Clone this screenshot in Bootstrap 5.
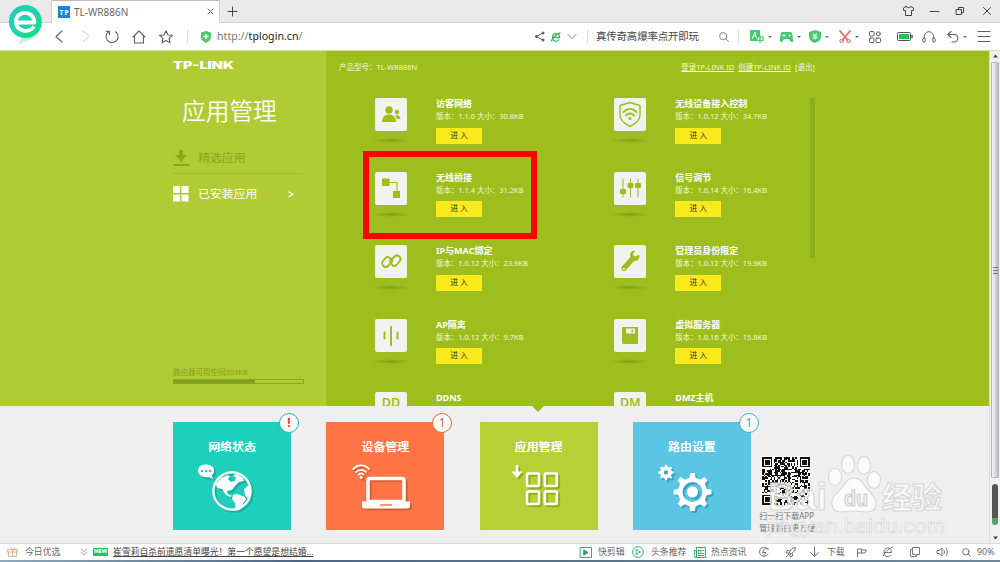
<!DOCTYPE html>
<html lang="zh-CN">
<head>
<meta charset="utf-8">
<meta name="viewport" content="width=device-width, initial-scale=1">
<title>TL-WR886N</title>
<link href="https://cdn.jsdelivr.net/npm/bootstrap@5.3.0/dist/css/bootstrap.min.css" rel="stylesheet">
<style>
  body{font-family:"Noto Sans","Noto Sans CJK SC",sans-serif;width:1000px;height:562px;overflow:hidden;font-size:9px;line-height:1;color:#444;background:#fff}
  svg{display:block;flex:none;overflow:visible}
  .ln{fill:none;stroke:currentColor;stroke-linecap:round;stroke-linejoin:round}
  /* browser frame */
  .tabstrip{height:23px;background:#eaeaea;border-bottom:1px solid #d2d2d2}
  .tab-now{width:169px;height:23px;margin-left:51px;background:#fff;border:1px solid #d2d2d2;border-top-color:#bbb;border-bottom:0;font-size:10px;color:#666;padding:0 5px 0 6px}
  .tab-ico{width:12px;height:12px;background:#1783df}
  .win-btns{display:grid;grid-template-columns:27px 26px 27px 9px;align-items:center;margin-right:1px}
  .logo-e{left:7px;top:4px;z-index:5}
  .toolbar{height:28px;grid-template-columns:46px repeat(5,26.6px) 22px 9px 7px 318px 16px 17px 19px 9px 123px 19px 12px repeat(4,29.7px) 28px 25px 25px 31px 1fr;border-bottom:1px solid #d4dfa2;color:#606060}
  .sep{width:1px;height:14px;background:#ddd}
  .url{font-size:10.6px;color:#777;letter-spacing:.02px}
  .url b{font-weight:400;color:#222}
  .find{font-size:10.4px;color:#444;letter-spacing:-.1px}
  .caret{width:0;border:2px solid transparent;border-top-color:#666;margin-top:2px}
  /* router page */
  .viewport{height:492px}
  .page{width:989px;background:#efefef}
  .stage{height:355px;background:#9dbe1c}
  .side{width:326px;background:#b0cb33;padding:10px 22px 0 173px;color:#fff}
  .side h1{font-size:23.7px;font-weight:350;margin:26px 0 0 9px;line-height:30px}
  .side-item{height:36px;font-size:11.9px;width:129px}
  .dim{color:#8ba71c;border-bottom:1px solid #a4bd2b;margin-top:12px;padding-top:5px}
  .space{font-size:7.5px;color:#879f25;margin-top:159px}
  .space .progress{width:131px;height:5px;border:1px solid #8ba71c;border-radius:0;background:transparent;margin-top:2px}
  .space .progress-bar{background:#82a01c}
  .apps-pane{padding:0 0 0 13px;color:#fff;font-size:7.5px}
  .topline{height:33px;width:476px;color:#f6fadd}
  .topline a{color:#f6fadd;text-underline-offset:1px}
  .app-grid{grid-template-columns:239.3px 200px;grid-auto-rows:73.5px;margin:14px 0 0 36px;height:308px;overflow:hidden;width:435px}
  .app-left{width:61px}
  .app-ico{width:32px;height:33px;background:#f2f2ee;border-radius:2px;color:#9dbe1c;overflow:hidden}
  .app-shadow{width:40px;height:5px;margin:7px 0 0 -4px;background:radial-gradient(ellipse at center,#7f9d17 0,#91b11b 38%,transparent 70%)}
  .app-name{font-size:9px;font-weight:700;line-height:12px;white-space:nowrap}
  .app-ver{font-size:7.45px;line-height:12px;white-space:nowrap;color:#f4f9d8}
  .enter{display:flex;align-items:center;justify-content:center;width:46px;height:16px;padding:0;border:0;border-radius:0;background:#fbea1b;color:#333;font-size:7.8px;margin-top:5.5px;line-height:1}
  .big{font-size:12.5px;font-weight:600;line-height:21px;text-align:center}
  .inner-scroll{left:484px;top:47px;width:5px;height:160px;background:#8daf1b}
  .frame-red{left:37px;top:100px;width:174px;height:88px;border:6px solid #fc0202}
  .notch{left:531px;top:354px;border:7px solid transparent;border-top-color:#9dbe1c;border-bottom:0}
  .dock{padding:16px 0 0 173px;gap:35.3px}
  .tile{width:118px;height:108px;color:#fff}
  .tile h2{font-size:11.9px;font-weight:500;text-align:center;margin:0;padding-top:17px;text-shadow:0 0 .4px #fff}
  .t-net{background:#1ecfbb;--ring:#29b8aa;--shade:#17b09f}.t-dev{background:#ff7445;--ring:#dc6a3c;--shade:#d85f37}
  .t-app{background:#b7d035;--ring:#9dbe1c;--shade:#94ad20}.t-set{background:#5bc5e4;--ring:#43aacd;--shade:#3ba2c6}
  .tile .art{filter:drop-shadow(2px 2px 0 var(--shade))}
  .note{width:20px;height:20px;border:1.5px solid var(--ring);border-radius:50%;background:#f7faf7;right:-8px;top:-9px;color:var(--ring);font-size:12px;line-height:1}
  .qr-col{margin-left:-27px;padding-top:34px;font-size:8px;color:#777;line-height:12px}
  .qr{width:50px;height:50px;background:#fff;margin-left:2px;margin-bottom:4px}
  .watermark{left:762px;top:398px;z-index:4}
  .vbar{width:11px;background:#f1f1f1;border-left:1px solid #ddd}
  .vthumb{height:416px;margin:0 1px;background:linear-gradient(90deg,#f5f5f5,#dcdce0 50%,#b9bac0);border:1px solid #b5b5b5;border-radius:1px}
  .boost{width:6px;height:41px;border-radius:3px;background:linear-gradient(#555 83%,#4aa865 83%);margin-top:6px}
  .status{height:17px;border-top:1px solid #dadada;color:#666;grid-template-columns:7px 18px 56px 12px 20px 467px 18px 34px 19px 43px 17px 48px 27px 24px 17px 30px 26px 27px 27px 25px 15px 1fr;font-size:8.9px;white-space:nowrap}
  .status>*{min-width:0}
  .status .ln{stroke-width:.9}
  .new{width:15px;height:8px;background:#22c35c;color:#fff;font-size:5.5px;font-weight:800;border-radius:1px}
  .hot{font-size:8.8px;color:#444}
  .taskbar{height:2px;background:linear-gradient(90deg,#8caabe,#4b6784 30%,#6f8799)}
</style>
</head>
<body class="d-flex flex-column m-0">

<header class="position-relative flex-shrink-0">
  <svg class="logo-e position-absolute" width="37" height="41" viewBox="0 0 37 41">
    <defs><linearGradient id="eg" x1="0" y1="0" x2="1" y2="1"><stop offset="0" stop-color="#20cfc0"/><stop offset=".5" stop-color="#20d3a9"/><stop offset="1" stop-color="#08e36b"/></linearGradient>
    <linearGradient id="et" x1="0" y1="0" x2="0" y2="1"><stop offset="0" stop-color="#09dc73"/><stop offset="1" stop-color="#8dffc9" stop-opacity=".4"/></linearGradient></defs>
    <path d="M34.500 20C33 31 22 38 11 40l5-8z" fill="url(#et)"/>
    <circle cx="18.300" cy="17.500" r="16.500" fill="url(#eg)"/>
    <path d="M11 18.500H27.500C27 5.500 9 6 9 17.500c0 10.500 13.500 12 18 5" fill="none" stroke="#fff" stroke-width="3.800" stroke-linejoin="round"/>
  </svg>
  <div class="tabstrip d-flex align-items-center">
    <div class="tab-now d-flex align-items-center">
      <svg class="tab-ico me-1"><text x="1.500" y="8.500" font-size="6.500" font-weight="800" fill="#fff" textLength="9">TP</text></svg><span>TL-WR886N</span>
      <svg class="ln ms-auto" width="7" height="7"><path d="M1 1l5 5M6 1L1 6"/></svg>
    </div>
    <svg class="ln ms-2" width="9" height="9"><path d="M4.500 0v9M0 4.500h9"/></svg>
    <div class="win-btns ms-auto me-2">
      <svg class="ln" width="11" height="10"><path d="M3 .5L.5 2v2.500h2v5h6v-5h2V2L8 .5C7 2 4 2 3 .5z"/></svg>
      <svg class="ln" width="9" height="9"><path d="M0 4.500h9"/></svg>
      <svg class="ln" width="8" height="8"><path d="M.5 2.500h5v5h-5zM2.500 2V.5h5v5H6"/></svg>
      <svg class="ln" width="8" height="8"><path d="M.5 .5l7 7M7.500 .5l-7 7"/></svg>
    </div>
  </div>
  <nav class="toolbar d-grid align-items-center">
    <i></i>
    <svg class="ln mx-auto" width="8" height="13"><path d="M7 1L1 6.500 7 12" stroke-width="1.100"/></svg>
    <svg class="ln mx-auto" width="8" height="13" color="#ccc"><path d="M1 1l6 5.500L1 12"/></svg>
    <svg class="ln mx-auto" width="14" height="13"><path d="M4 1.500A6 6 0 1 0 10.500 1.700M1 1.200h3.500v3.500" stroke-width="1.100"/></svg>
    <svg class="ln mx-auto" width="14" height="14"><path d="M1 7l6-6 6 6M2.500 6v7h9V6" stroke-width="1.100"/></svg>
    <svg class="ln mx-auto" width="14" height="14"><path d="M7 .8l1.900 4.200 4.500.4-3.400 3 1 4.500L7 10.500 3 12.900l1-4.500-3.400-3 4.500-.4z" stroke-width="1.100"/></svg>
    <i class="sep ms-2"></i>
    <svg width="10" height="12"><path d="M5 0l5 1.500V6c0 3-2.500 4.500-5 6C2.500 10.500 0 9 0 6V1.500z" fill="#48ca73"/><path d="M5 3v5M2.500 5.500h5" stroke="#fff" stroke-width="1.500"/></svg>
    <i></i>
    <span class="url">http://<b>tplogin.cn</b>/</span>
    <svg width="9" height="9"><g class="ln"><path d="M8 1L1 4.500 8 8"/></g><g fill="#666"><circle cx="8" cy="1" r="1.500"/><circle cx="1.500" cy="4.500" r="1.500"/><circle cx="8" cy="8" r="1.500"/></g></svg>
    <svg width="10" height="10"><path d="M2 5.500h6.500C8.500-.5 1.500.5 1.500 5.500c0 4.500 5 4.500 6.500 2M0 9.500C3 4 6 1.500 9.500 1" fill="none" stroke="#36bd69" stroke-width="1.300"/></svg>
    <svg class="ln" width="8" height="5" color="#888"><path d="M0 .5l4 4 4-4"/></svg>
    <i class="sep"></i>
    <span class="find text-nowrap">真传奇高爆率点开即玩</span>
    <svg class="ln" width="10" height="10" color="#888"><circle cx="4.200" cy="4.200" r="3.600"/><path d="M7 7l2.500 2.500"/></svg>
    <i class="sep"></i>
    <span class="d-flex align-items-center gap-1"><svg width="14" height="13"><rect width="10" height="11" rx="1" fill="#46c96f"/><path d="M2 9l3-7 1.500 7M3 6h3" stroke="#fff" fill="none"/><path d="M7 7h6v3.500H7zM10 5v8" stroke="#46c96f" stroke-width="1.200" fill="#fff"/></svg><i class="caret"></i></span>
    <span class="d-flex align-items-center gap-1"><svg width="13" height="12"><path d="M2 1h9c1 0 2 4 2 9 0 2-2 2-4-2H4c-2 4-4 4-4 2 0-5 1-9 2-9z" fill="#46c96f"/><path d="M2.500 4.500h3M4 3v3" stroke="#fff"/><circle cx="9.500" cy="4.500" r="1" fill="#fff"/></svg><i class="caret"></i></span>
    <span class="d-flex align-items-center gap-1"><svg width="12" height="13"><path d="M6 0l6 2v4c0 4-3 6-6 7-3-1-6-3-6-7V2z" fill="#46c96f"/><path d="M4 3l2 2.500L8 3M3.500 6h5M3.500 8h5M6 5.500v4" stroke="#fff" fill="none"/></svg><i class="caret"></i></span>
    <span class="d-flex align-items-center gap-1"><svg width="12" height="12" class="ln" color="#ec6a61"><path d="M1 0l7.500 9M11 0L3.500 9" stroke-width="1.800"/><circle cx="2.500" cy="10" r="1.700"/><circle cx="9.500" cy="10" r="1.700"/></svg><i class="caret"></i></span>
    <svg class="ln" width="12" height="12"><rect x=".5" y=".5" width="4.500" height="4.500" rx="1"/><rect x=".5" y="7" width="4.500" height="4.500" rx="1"/><rect x="7" y="7" width="4.500" height="4.500" rx="1"/><circle cx="9.300" cy="2.800" r="2"/></svg>
    <svg width="16" height="9"><rect x=".5" y=".5" width="13" height="8" rx="1" fill="none" stroke="#555"/><rect x="2" y="2" width="10" height="5" fill="#17c957"/><path d="M15 3v3" stroke="#555" stroke-width="1.500"/></svg>
    <svg class="ln" width="14" height="12"><path d="M2 7C2-1.500 12-1.500 12 7M3 7v4H2C0 11 0 7.500 2 7zM11 7v4h1c2 0 2-3.500 0-4z"/></svg>
    <span class="d-flex align-items-center"><svg class="ln" width="12" height="12"><path d="M4 .5L.8 3.500 4 6.500M1 3.500h6c5 0 5 7.500 0 7.500H5" stroke-width="1.100"/></svg><i class="caret ms-1"></i></span>
    <svg class="ln" width="12" height="11"><path d="M0 .5h12M0 5.500h12M0 10.500h12" stroke-width="1.200"/></svg>
  </nav>
</header>

<div class="viewport d-flex flex-shrink-0">
  <main class="page position-relative">
    <section class="stage d-flex">
      <aside class="side flex-shrink-0">
        <svg width="61" height="9"><text x="0" y="7.700" font-family="Inter,sans-serif" font-weight="900" font-size="10" fill="#fff" textLength="61" lengthAdjust="spacingAndGlyphs">TP-LINK</text></svg>
        <h1>应用管理</h1>
        <div class="side-item dim d-flex align-items-center gap-2">
          <svg width="17" height="16" fill="currentColor"><path d="M6 0h4v5h4L8 12 2 5h4zM0 14h16v2H0z"/></svg><span>精选应用</span>
        </div>
        <div class="side-item d-flex align-items-center gap-2 pt-1">
          <svg width="17" height="16" fill="#fff"><path d="M0 0h7v7H0zM8.500 0h7v7h-7zM0 8.500h7v7H0zM8.500 8.500h7v7h-7z"/></svg><span>已安装应用</span>
          <svg class="ln ms-auto me-2" width="5" height="5"><path d="M0 0l4 2.300L0 4.600" stroke-width="1.300"/></svg>
        </div>
        <div class="space">路由器可用空间203KB
          <div class="progress"><div class="progress-bar" style="width:63%"></div></div>
        </div>
      </aside>
      <div class="apps-pane position-relative flex-grow-1">
        <div class="topline d-flex align-items-center">
          <span>产品型号：TL-WR886N</span>
          <a class="ms-auto" href="#">登录TP-LINK ID</a><a class="ms-1" href="#">创建TP-LINK ID</a><span class="ms-1">[退出]</span>
        </div>
        <div class="app-grid d-grid" id="apps"></div>
        <div class="inner-scroll position-absolute"></div>
        <div class="frame-red position-absolute"></div>
      </div>
    </section>
    <i class="notch position-absolute"></i>
    <section class="dock d-flex">
      <div class="tile t-net position-relative"><h2>网络状态</h2>
        <span class="note position-absolute d-flex align-items-center justify-content-center fw-bold text-danger">!</span>
        <svg class="art" width="118" height="60"><path d="M33 11.500c4.500 0 8 2.500 8 6 0 2.500-1 4-2.500 5l2 3.500-5-2c-5 1-10.500-1.500-10.500-6.500 0-3.500 3.500-6 8-6z" fill="#fff"/><path d="M28 18h2M32 18h2M36 18h2" stroke="#1ecfbb" stroke-width="2"/><circle cx="59" cy="38" r="18.600" fill="none" stroke="#fff" stroke-width="2.300"/><path d="M43 31l5-6 7-3 2 2-2 2 3 3 4-1 1-3-3-3 4-1 6 4 1 3-5 1-4 4-3 4-5 1 1 3 4 2-2 1-4-2-4-6-5-1zM60 42l4-1 8 3 1 3-3 3-2 6-5 2-1-8-3-4zM76 32l1 6-2 8-3-4-1-6z" fill="#fff"/></svg>
      </div>
      <div class="tile t-dev position-relative"><h2>设备管理</h2>
        <span class="note position-absolute d-flex align-items-center justify-content-center">1</span>
        <svg class="art" width="118" height="60"><g fill="none" stroke="#fff" stroke-width="1.700"><path d="M26.500 16.500c5-5.500 12-5.500 17 0M29.500 19.500c3-3.500 8-3.500 11 0M32 22c2-2 4-2 6 0"/></g><circle cx="35" cy="24.500" r="1.400" fill="#fff"/><rect x="42" y="25.500" width="36" height="23" rx="2" fill="none" stroke="#fff" stroke-width="3.500"/><path d="M36 48.500h48v4c0 2-1 3-3 3H39c-2 0-3-1-3-3z" fill="#fff"/><path d="M54 52h12" stroke="#ff7445" stroke-width="1.500"/></svg>
      </div>
      <div class="tile t-app position-relative"><h2>应用管理</h2>
        <svg class="art" width="118" height="60"><path d="M35.700 12v6.500h-4.200l5.500 6.500 5.500-6.500h-4.200V12z" fill="#fff"/><g fill="none" stroke="#fff" stroke-width="2.600"><rect x="47" y="20.500" width="12" height="12.500" rx="1"/><rect x="64.800" y="20.500" width="12" height="12.500" rx="1"/><rect x="47" y="38.500" width="12" height="12.500" rx="1"/><rect x="64.800" y="38.500" width="12" height="12.500" rx="1"/></g></svg>
      </div>
      <div class="tile t-set position-relative"><h2>路由设置</h2>
        <span class="note position-absolute d-flex align-items-center justify-content-center">1</span>
        <svg class="art" width="118" height="60"><g id="cogs"></g></svg>
      </div>
      <div class="qr-col text-nowrap"><svg class="qr" id="qr" viewBox="-1 -1 35 35" shape-rendering="crispEdges"></svg>
        <div>扫一扫下载APP</div><div>管理路由更方便</div></div>
    </section>
    <svg class="watermark position-absolute" width="190" height="90" fill="#fff" fill-opacity=".72" stroke="#d6d6d6" stroke-width="1.100">
      <text x="6" y="61" font-family="Liberation Sans" font-weight="700" font-size="38" textLength="59" lengthAdjust="spacingAndGlyphs">Bai</text>
      <ellipse cx="73" cy="28" rx="6.500" ry="8.500"/><ellipse cx="86" cy="15.500" rx="6.500" ry="9"/><ellipse cx="102" cy="16.500" rx="6.500" ry="9"/><ellipse cx="112" cy="31" rx="6.500" ry="8.500"/>
      <path d="M92 29c8 0 9 7 15 13 12 12 7 21-3 21-5 0-7-1-12-1s-8 1-13 1c-10 0-13-12-3-20 7-6 8-14 16-14z"/>
      <text x="82" y="57" font-family="Liberation Sans" font-weight="700" font-size="22" fill="#f1f1f1" stroke="#ccc" textLength="24" lengthAdjust="spacingAndGlyphs">du</text>
      <text x="120" y="59" font-family="Noto Sans CJK SC" font-weight="700" font-size="30">经验</text>
      <text x="6" y="84" font-family="Liberation Sans" font-size="21" textLength="177" stroke-width=".7" lengthAdjust="spacingAndGlyphs">jingyan.baidu.com</text>
    </svg>
  </main>
  <div class="vbar d-flex flex-column">
    <svg width="10" height="11"><path d="M3 6.500l2.500-3 2.500 3z" fill="#444"/></svg>
    <div class="vthumb d-flex align-items-center justify-content-center"><svg width="5" height="7"><path d="M0 .5h5M0 3.500h5M0 6.500h5" stroke="#777"/></svg></div>
    <div class="boost mx-auto"></div>
    <svg class="mt-auto" width="10" height="9"><path d="M3 2.500h5L5.500 5.500z" fill="#444"/></svg>
  </div>
</div>

<footer class="status d-grid align-items-center flex-shrink-0">
  <i></i>
  <svg class="ln" width="11" height="10" color="#dfaa8a"><path d="M.5 2.500h10v2.500H.5zM1.500 5v4.500h8V5M5.500 2.500v7M5.500 2.500L3 .5M5.500 2.500L8 .5"/></svg>
  <span>今日优选</span>
  <svg class="ln" width="6" height="8" color="#999"><path d="M0 1l3 2.500L6 1M0 4.500L3 7l3-2.500"/></svg>
  <span class="new d-flex align-items-center justify-content-center">NEW</span>
  <a class="hot" href="#">崔雪莉自杀前遗愿清单曝光！第一个愿望是想结婚...</a>
  <svg class="ln" width="12" height="11" color="#24a35e"><rect x=".5" y=".5" width="11" height="10"/><path d="M4 3l4 2.500L4 8z" fill="currentColor"/></svg>
  <span>快剪辑</span>
  <svg class="ln" width="12" height="12" color="#24b364"><circle cx="6" cy="6" r="5.400"/><path d="M4.500 3.500l4 2.500-4 2.500z"/></svg>
  <span>头条推荐</span>
  <svg class="ln" width="12" height="11" color="#24a35e"><path d="M2.500 .5h9v10H1c-1 0-.5-6-.5-7h2zM2.500 4v6M4.500 3.500h2.500v3H4.500zM8.500 3.500h1.500M8.500 6.500h1.500M4.500 8.500h5"/></svg>
  <span>热点资讯</span>
  <svg class="ln" width="10" height="10"><path d="M8.500 2a4.500 4.500 0 1 0 .5 5M5.500 2L3.500 5.500h3.500L5 8.500M6.500 1L9.500 2"/></svg>
  <svg class="ln" width="10" height="10"><path d="M3 6C4 3 6 1 9.500.5 9 4 7 6 4 7zM3 3.500H1L0 6h3M6.500 7v2L4 10V7M0 10l3-3"/></svg>
  <svg class="ln" width="9" height="10"><path d="M4.500 0v9M.5 5.500l4 4 4-4"/></svg>
  <span>下载</span>
  <svg class="ln" width="10" height="9"><path d="M.5 9V1h4v4h-4M4.500 2h5L8 5H4.500"/></svg>
  <svg class="ln" width="10" height="10"><path d="M1.500 5.500h7C8.500-.5 1-.5 1 5.500c0 5 6 5 7 2.500M0 9C3 4 6 1 10 0"/></svg>
  <svg class="ln" width="10" height="10"><path d="M3 .5h6.500v7H3zM2 2.500H.5v7h6V8"/></svg>
  <svg class="ln" width="11" height="10"><path d="M.5 3.500H2L5 1v8L2 6.500H.5zM7 3q1.500 2 0 4M9 1q3 4 0 8"/></svg>
  <svg class="ln" width="9" height="9"><circle cx="3.800" cy="3.800" r="3.200"/><path d="M6 6l2.500 2.500"/></svg>
  <span>90%</span>
</footer>
<div class="taskbar flex-shrink-0"></div>

<script src="https://cdn.jsdelivr.net/npm/bootstrap@5.3.0/dist/js/bootstrap.bundle.min.js"></script>
<script>
  const glyph = {
    guest:'<g fill="currentColor"><circle cx="14" cy="12" r="3.700"/><path d="M7 24c0-5 3-7.500 7-7.500s7 2.500 7 7.500z"/><circle cx="22" cy="14" r="2.200"/><path d="M20 17.500c3-1 5 .5 5.500 3.500H22z"/></g>',
    shield:'<g class="ln" stroke-width="1.400"><path d="M16 4.500l10 3V17c0 6-5 9-10 11.500C11 26 6 23 6 17V7.500z"/><path d="M9.500 14c4-4 9-4 13 0M12 17.500c2.500-2.500 5.500-2.500 8 0" stroke-width="1.800"/></g><circle cx="16" cy="20.500" r="1.500" fill="currentColor"/>',
    bridge:'<path d="M7 6.500h7.500V14H7zM18 19h7v7h-7z" fill="currentColor"/><path d="M14 10.500h8V20" fill="none" stroke="currentColor" stroke-width="1.200"/>',
    tune:'<path d="M9 7v18M16.500 7v18M24 7v18" class="ln"/><g fill="currentColor"><rect x="6" y="17" width="6" height="5" rx="1"/><rect x="13.500" y="11" width="6" height="5" rx="1"/><rect x="21" y="11" width="6" height="5" rx="1"/></g>',
    link:'<g class="ln" stroke-width="1.900"><path d="M15 13.500c-1-2-3-2-4-1l-3 3.500c-3 3 2 8 5 5l3.500-3.500c1.500-1.500 1-3-.5-4M17 19.500c1 2 3 2 4.500.5l3-3.500c3-3.500-2-8-5-5L16 15c-1.500 1.500-1 3 .5 4"/></g>',
    wrench:'<path d="M25 9.500l-3.500 2-2-1-.5-2L21.500 6c-4-1-6.500 3-5 6l-8.500 9.500c-2 3 1.500 6 3.500 4L20 16c4 .5 6.500-3 5-6.500zM10 24.700a1 1 0 1 1 0-2 1 1 0 0 1 0 2z" fill="currentColor" fill-rule="evenodd"/>',
    wave:'<path d="M9.500 13.500v6M16 8v18M22.500 13.500v6" class="ln" stroke-width="2"/>',
    disk:'<path d="M8 9c0-1 0-1 1-1h15v17H9l-1-1zM12 9.500v5h9v-5zM17.500 10.500h1.500v3h-1.500z" fill="currentColor" fill-rule="evenodd"/>'
  };
  const apps = [
    ['guest','访客网络','1.1.0','30.8KB'],['shield','无线设备接入控制','1.0.12','34.7KB'],
    ['bridge','无线桥接','1.1.4','31.2KB'],['tune','信号调节','1.0.14','16.4KB'],
    ['link','IP与MAC绑定','1.0.12','23.9KB'],['wrench','管理员身份限定','1.0.12','19.9KB'],
    ['wave','AP隔离','1.0.12','9.7KB'],['disk','虚拟服务器','1.0.16','15.8KB'],
    ['DD','DDNS'],['DM','DMZ主机']
  ];
  document.getElementById('apps').innerHTML = apps.map(([g,n,v,s]) =>
    `<div class="d-flex"><div class="app-left flex-shrink-0"><div class="app-ico">${glyph[g] ? `<svg width="32" height="33">${glyph[g]}</svg>` : `<div class="big">${g}</div>`}</div><div class="app-shadow"></div></div>
     <div><div class="app-name">${n}</div>${v ? `<div class="app-ver">版本：${v} 大小：${s}</div><button class="btn enter">进 入</button>` : ''}</div></div>`).join('');

  // gear outline with n teeth
  function cog(cx, cy, r, n) {
    const p = [];
    for (let i = 0; i < n; i++) for (const [o, k] of [[-.27,.77],[-.15,1],[.15,1],[.27,.77]]) {
      const a = (i + o) * 2 * Math.PI / n;
      p.push((cx + r*k*Math.sin(a)).toFixed(1) + ' ' + (cy - r*k*Math.cos(a)).toFixed(1));
    }
    return 'M' + p.join('L') + 'z';
  }
  const ring = (x, y, r) => `M${x-r} ${y}a${r} ${r} 0 1 0 ${2*r} 0a${r} ${r} 0 1 0 ${-2*r} 0z`;
  document.getElementById('cogs').innerHTML =
    `<path fill="#fff" fill-rule="evenodd" d="${cog(33,19.500,7.800,8)}${ring(33,19.500,2.200)}${cog(59.500,39,19,8)}${ring(59.500,39,10)}"/><circle cx="59.500" cy="39" r="5.500" fill="#fff"/>`;

  // QR pattern on a 33-module grid with three finder squares
  let seed = 77, d = '';
  const rnd = () => (seed = seed * 16807 % 2147483647) / 2147483647;
  for (let y = 0; y < 33; y++) for (let x = 0; x < 33; x++) {
    const fx = x < 8 ? x : x > 24 ? x - 26 : -9, fy = y < 8 ? y : y > 24 ? y - 26 : -9;
    let on = rnd() > .47;
    if (fx > -9 && fy > -9 && !(x > 24 && y > 24)) {
      const m = Math.max(Math.abs(fx - 3), Math.abs(fy - 3));
      on = m === 3 || m < 2;
    }
    if (on) d += `M${x} ${y}h1v1h-1z`;
  }
  document.getElementById('qr').innerHTML = `<path d="${d}" fill="#111"/>`;
</script>
</body>
</html>
